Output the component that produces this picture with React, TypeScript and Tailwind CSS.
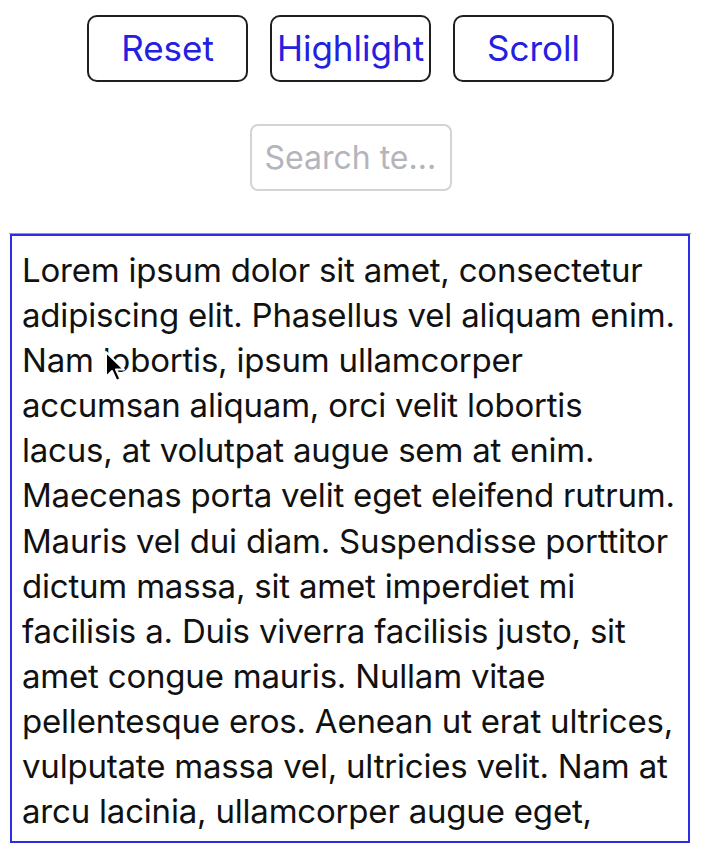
import React from "react";

const lines = [
  "Lorem ipsum dolor sit amet, consectetur",
  "adipiscing elit. Phasellus vel aliquam enim.",
  "Nam lobortis, ipsum ullamcorper",
  "accumsan aliquam, orci velit lobortis",
  "lacus, at volutpat augue sem at enim.",
  "Maecenas porta velit eget eleifend rutrum.",
  "Mauris vel dui diam. Suspendisse porttitor",
  "dictum massa, sit amet imperdiet mi",
  "facilisis a. Duis viverra facilisis justo, sit",
  "amet congue mauris. Nullam vitae",
  "pellentesque eros. Aenean ut erat ultrices,",
  "vulputate massa vel, ultricies velit. Nam at",
  "arcu lacinia, ullamcorper augue eget,",
  "interdum nisl. Vestibulum lobortis mollis nisi,",
];

export default function App() {
  const font = { fontFamily: "Inter, 'Noto Sans', sans-serif" };
  return (
    <div className="w-[706px] h-[866px] bg-white overflow-hidden relative" style={font}>
      <div className="w-[701px] flex flex-col items-center">
        <div className="flex gap-[22px] mt-[15px]">
          {["Reset", "Highlight", "Scroll"].map((t) => (
            <button
              key={t}
              className="w-[161px] h-[67px] border-2 border-[#1f1f1f] rounded-[10px] text-[#2420e0] text-[35px] leading-none flex items-center justify-center bg-white"
            >
              {t}
            </button>
          ))}
        </div>
        <div className="mt-[42px] w-[202px] h-[67px] border-2 border-[#d4d4d8] rounded-[8px] flex items-center pl-[13px] text-[32px] text-[#b4b4bc]">
          Search te...
        </div>
      </div>
      <div className="absolute left-[9px] top-[233px] w-[682px] h-[610px] border-t border-[#9a9a9a]" />
      <div className="ml-[10px] mt-[43px] w-[680px] h-[609px] border-2 border-[#2c2ce0] overflow-hidden pl-[10px] pt-[12px] text-[33px] leading-[45.1px] text-[#111] tracking-[-0.2px]">
        {lines.map((l, i) => (
          <div key={i} className="whitespace-nowrap">{l}</div>
        ))}
      </div>
      <svg className="absolute left-[104px] top-[350px]" width="24" height="34" viewBox="0 0 24 34">
        <path d="M2 2 L2 27 L8 21 L12.5 31 L16.5 29 L12 19.5 L20 19.5 Z" fill="#000" stroke="#fff" strokeWidth="2" strokeLinejoin="round" />
      </svg>
    </div>
  );
}
